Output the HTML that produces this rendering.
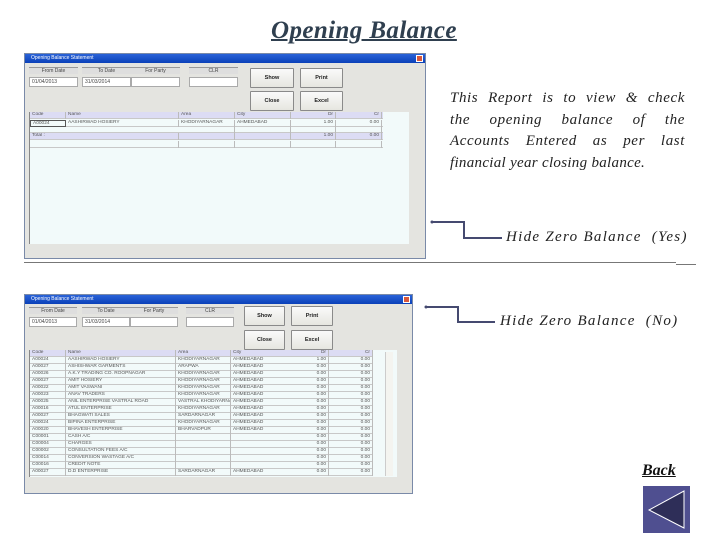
<!DOCTYPE html>
<html><head><meta charset="utf-8"><style>
*{margin:0;padding:0;box-sizing:border-box}
body{width:720px;height:540px;background:#fff;position:relative;overflow:hidden;font-family:"Liberation Sans",sans-serif}
.a{position:absolute}
.win{position:absolute;background:#e4e4e0;border:1px solid #7a8aa8}
.tb{position:absolute;left:0;top:0;right:0;height:9px;background:linear-gradient(#2a63d8,#0a40b8);color:#fff;font-size:5px;line-height:9px;padding-left:6px}
.x{position:absolute;right:2px;top:1px;width:7px;height:7px;background:#d8583c;border:1px solid #fff}
.lbl{position:absolute;height:7px;background:#dedede;border-top:1px solid #999;font-size:5px;line-height:6px;text-align:center;color:#444}
.inp{position:absolute;height:10px;background:#fff;border:1px solid #aaa;font-size:5px;line-height:8px;padding-left:2px;color:#444}
.btn{position:absolute;background:linear-gradient(#fafafa,#e6e6e0);border:1px solid #8a8a8a;border-radius:1px;font-size:5.5px;font-weight:bold;text-align:center;color:#222}
.grid{position:absolute;background:#f2fafa;border-left:1px solid #888}
.row{position:absolute;left:0;height:7px;font-size:4.8px;line-height:6.5px;color:#555;border-bottom:1px solid #c8c8c8}
.row span{position:absolute;top:0;height:7px;border-right:1px solid #bbb;padding-left:2px;white-space:nowrap;overflow:hidden}
.hd{background:#dcdcf4}
.r{text-align:right;padding-right:2px}
.p{position:absolute;left:450px;width:235px;font-family:'Liberation Serif',serif;font-style:italic;font-size:15px;color:#222;text-align:justify;text-align-last:justify;white-space:nowrap;letter-spacing:0.6px}
.hz{position:absolute;font-family:'Liberation Serif',serif;font-style:italic;font-size:15px;color:#222;white-space:pre;letter-spacing:1.3px}
</style></head><body>

<div class="a" style="left:271px;top:17px;font-family:'Liberation Serif',serif;font-style:italic;font-weight:bold;font-size:25px;color:#2f3f4f;text-decoration:underline;text-decoration-thickness:2px;letter-spacing:0.4px">Opening Balance</div>

<!-- Window 1 -->
<div class="win" style="left:24px;top:53px;width:402px;height:206px">
 <div class="tb">Opening Balance Statement<div class="x"></div></div>
 <div class="lbl" style="left:4px;top:13px;width:49px">From Date</div>
 <div class="lbl" style="left:57px;top:13px;width:49px">To Date</div>
 <div class="lbl" style="left:106px;top:13px;width:49px">For Party</div>
 <div class="lbl" style="left:164px;top:13px;width:49px">CLR</div>
 <div class="inp" style="left:4px;top:23px;width:49px">01/04/2013</div>
 <div class="inp" style="left:57px;top:23px;width:49px">31/03/2014</div>
 <div class="inp" style="left:106px;top:23px;width:49px"></div>
 <div class="inp" style="left:164px;top:23px;width:49px"></div>
 <div class="btn" style="left:225px;top:14px;width:44px;height:20px;line-height:18px">Show</div>
 <div class="btn" style="left:275px;top:14px;width:43px;height:20px;line-height:18px">Print</div>
 <div class="btn" style="left:225px;top:37px;width:44px;height:20px;line-height:18px">Close</div>
 <div class="btn" style="left:275px;top:37px;width:43px;height:20px;line-height:18px">Excel</div>
 <div class="grid" style="left:4px;top:58px;width:380px;height:132px">
  <div class="row hd" style="top:0;width:353px"><span style="left:0;width:36px">Code</span><span style="left:36px;width:113px">Name</span><span style="left:149px;width:56px">Area</span><span style="left:205px;width:56px">City</span><span class="r" style="left:261px;width:45px">Dr</span><span class="r" style="left:306px;width:46px">Cr</span></div>
  <div class="row" style="top:7.5px;width:353px"><span style="left:0;width:36px;border:1px solid #555">A00024</span><span style="left:36px;width:113px">AASHIRWAD HOSIERY</span><span style="left:149px;width:56px">KHODIYARNAGAR</span><span style="left:205px;width:56px">AHMEDABAD</span><span class="r" style="left:261px;width:45px">1.00</span><span class="r" style="left:306px;width:46px">0.00</span></div>
  <div class="row" style="top:15px;width:353px;height:6px"><span style="left:0;width:149px;border:none"></span><span style="left:149px;width:56px"></span><span style="left:205px;width:56px"></span><span style="left:261px;width:45px"></span><span style="left:306px;width:46px"></span></div>
  <div class="row hd" style="top:21px;width:353px"><span style="left:0;width:149px">Total :</span><span style="left:149px;width:56px"></span><span style="left:205px;width:56px"></span><span class="r" style="left:261px;width:45px">1.00</span><span class="r" style="left:306px;width:46px">0.00</span></div>
  <div class="row" style="top:28.5px;width:353px"><span style="left:0;width:149px"></span><span style="left:149px;width:56px"></span><span style="left:205px;width:56px"></span><span style="left:261px;width:45px"></span><span style="left:306px;width:46px"></span></div>
 </div>
</div>

<div class="p" style="top:90px">This Report is to view &amp; check</div>
<div class="p" style="top:112px">the opening balance of the</div>
<div class="p" style="top:133px">Accounts Entered as per last</div>
<div class="p" style="top:155px;text-align:left;text-align-last:left;letter-spacing:0.3px">financial year closing balance.</div>

<svg class="a" style="left:420px;top:215px" width="90" height="30">
 <circle cx="12" cy="7" r="1.5" fill="#454a70"/>
 <polyline points="12,7 44,7 44,23 82,23" fill="none" stroke="#454a70" stroke-width="2"/>
</svg>
<svg class="a" style="left:420px;top:300px" width="80" height="30">
 <circle cx="6" cy="7" r="1.5" fill="#454a70"/>
 <polyline points="6,7 38,7 38,22 75,22" fill="none" stroke="#454a70" stroke-width="2"/>
</svg>
<div class="hz" style="left:506px;top:229px">Hide Zero Balance  (Yes)</div>
<div class="hz" style="left:500px;top:313px">Hide Zero Balance  (No)</div>

<div class="a" style="left:24px;top:262px;width:652px;height:1px;background:#777"></div>
<div class="a" style="left:676px;top:264px;width:20px;height:1px;background:#777"></div>

<!-- Window 2 -->
<div class="win" style="left:24px;top:294px;width:389px;height:200px">
 <div class="tb">Opening Balance Statement<div class="x"></div></div>
 <div class="lbl" style="left:4px;top:12px;width:48px">From Date</div>
 <div class="lbl" style="left:57px;top:12px;width:48px">To Date</div>
 <div class="lbl" style="left:105px;top:12px;width:48px">For Party</div>
 <div class="lbl" style="left:161px;top:12px;width:48px">CLR</div>
 <div class="inp" style="left:4px;top:22px;width:48px">01/04/2013</div>
 <div class="inp" style="left:57px;top:22px;width:48px">31/03/2014</div>
 <div class="inp" style="left:105px;top:22px;width:48px"></div>
 <div class="inp" style="left:161px;top:22px;width:48px"></div>
 <div class="btn" style="left:219px;top:11px;width:41px;height:20px;line-height:18px">Show</div>
 <div class="btn" style="left:266px;top:11px;width:42px;height:20px;line-height:18px">Print</div>
 <div class="btn" style="left:219px;top:35px;width:41px;height:20px;line-height:18px">Close</div>
 <div class="btn" style="left:266px;top:35px;width:42px;height:20px;line-height:18px">Excel</div>
 <div class="grid" style="left:4px;top:55px;width:368px;height:127px">
  <div class="row hd" style="top:0;width:343px"><span style="left:0;width:36px">Code</span><span style="left:36px;width:110px">Name</span><span style="left:146px;width:55px">Area</span><span style="left:201px;width:98px">City</span><span class="r" style="left:262px;width:37px;border-left:none">Dr</span><span class="r" style="left:299px;width:44px">Cr</span></div>
 </div>
 <div class="a" style="left:360px;top:57px;width:8px;height:124px;background:#f4f4f0;border-left:1px solid #ccc"></div>
</div>

<div class="a" style="left:642px;top:462px;font-family:'Liberation Serif',serif;font-style:italic;font-weight:bold;font-size:16px;color:#111;text-decoration:underline">Back</div>
<svg class="a" style="left:643px;top:486px" width="47" height="47">
 <rect width="47" height="47" fill="#4f4f90"/>
 <polygon points="41,5 41,42 6,24" fill="#2e2e58" stroke="#fff" stroke-width="1"/>
</svg>

<script>
var d=[["A00024","AASHIRWAD HOSIERY","KHODIYARNAGAR","AHMEDABAD","1.00"],["A00027","ASHISHWAR GARMENTS","ARAPWA","AHMEDABAD","0.00"],["A00026","A.K.Y TRADING CO. ROOPNAGAR","KHODIYARNAGAR","AHMEDABAD","0.00"],["A00027","AMIT HOSIERY","KHODIYARNAGAR","AHMEDABAD","0.00"],["A00022","AMIT VASWANI","KHODIYARNAGAR","AHMEDABAD","0.00"],["A00023","ANAV TRADERS","KHODIYARNAGAR","AHMEDABAD","0.00"],["A00025","ANIL ENTERPRISE VASTRAL ROAD","VASTRAL KHODIYARNAGAR","AHMEDABAD","0.00"],["A00016","ATUL ENTERPRISE","KHODIYARNAGAR","AHMEDABAD","0.00"],["A00027","BHAGWATI SALES","SARDARNAGAR","AHMEDABAD","0.00"],["A00024","BIPINA ENTERPRISE","KHODIYARNAGAR","AHMEDABAD","0.00"],["A00020","BHAVESH ENTERPRISE","BHARVADPUR","AHMEDABAD","0.00"],["C00001","CASH A/C","","","0.00"],["C00004","CHARGES","","","0.00"],["C00002","CONSULTATION FEES A/C","","","0.00"],["C00014","CONVERSION WASTAGE A/C","","","0.00"],["C00016","CREDIT NOTE","","","0.00"],["A00027","D.D ENTERPRISE","SARDARNAGAR","AHMEDABAD","0.00"]];
var g=document.querySelectorAll('.grid')[1],h='';
d.forEach(function(r,i){h+='<div class="row" style="top:'+(7*(i+1))+'px;width:343px"><span style="left:0;width:36px">'+r[0]+'</span><span style="left:36px;width:110px">'+r[1]+'</span><span style="left:146px;width:55px">'+r[2]+'</span><span style="left:201px;width:61px;border-right:none">'+r[3]+'</span><span class="r" style="left:262px;width:37px">'+r[4]+'</span><span class="r" style="left:299px;width:44px">0.00</span></div>';});
g.insertAdjacentHTML('beforeend',h);
</script>
</body></html>
